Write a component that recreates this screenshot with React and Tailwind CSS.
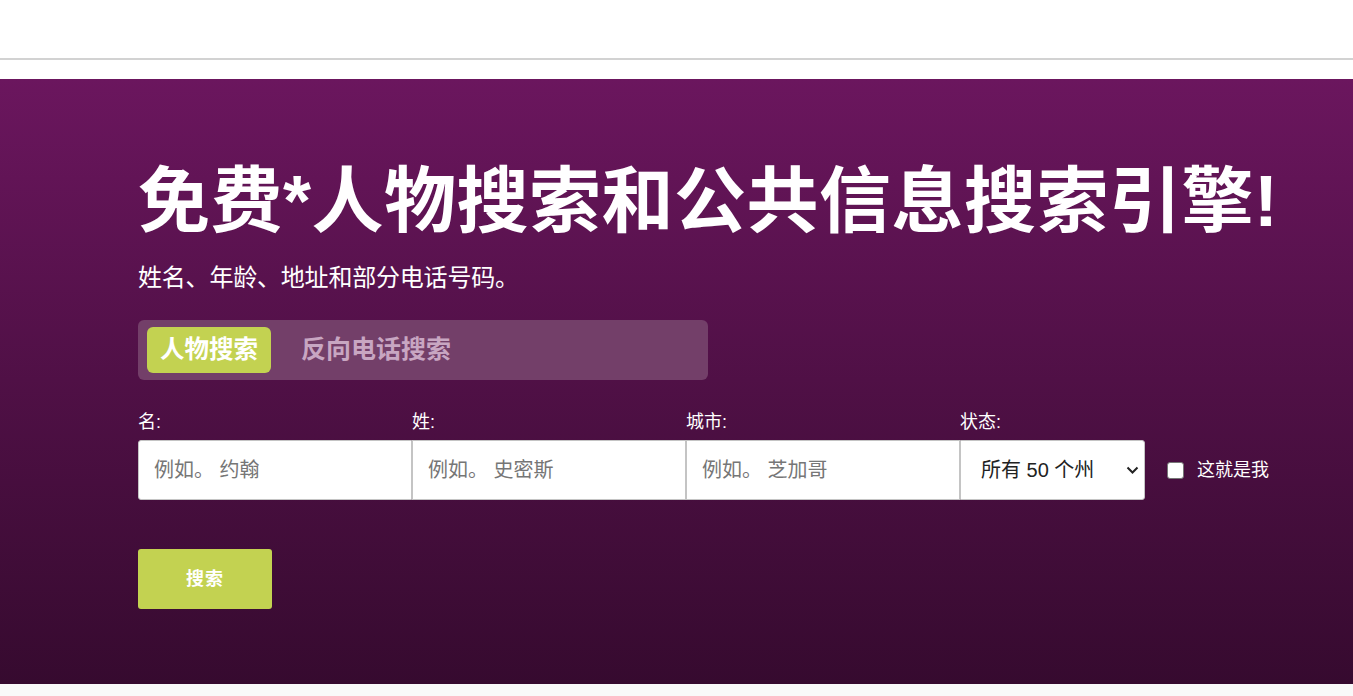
import React from "react";

const font = {
    fontFamily:
        '"Liberation Sans", "Noto Sans CJK SC", "Noto Sans", sans-serif',
};

const Field = ({ label, placeholder, first }) => (
    <div className="flex flex-col w-[274px]">
        <label className="text-white text-[18px] leading-[22px] mb-[7px]">
            {label}
        </label>
        <input
            type="text"
            placeholder={placeholder}
            className={`h-[60px] bg-white border border-[#c4c4c4] px-[15px] text-[20px] text-[#333] placeholder:text-[#767676] outline-none ${
                first ? "rounded-l-[3px]" : ""
            }`}
        />
    </div>
);

export default function App() {
    return (
        <div className="min-h-[696px] bg-[#f9f9f9]" style={font}>
            <header className="h-[60px] bg-white border-b-[2px] border-[#d2d2d2] shadow-[0_2px_3px_rgba(0,0,0,0.08)]" />
            <div className="h-[19px] bg-white" />
            <section className="bg-gradient-to-b from-[#6b165e] to-[#360a2f] h-[605px] pl-[138px] pt-[80px]">
                <h1 className="text-white font-bold text-[72px] leading-[84px] tracking-[0.5px] whitespace-nowrap">
                    免费*人物搜索和公共信息搜索引擎!
                </h1>
                <p className="text-white text-[24px] leading-[30px] mt-[20px] tracking-[-0.2px]">
                    姓名、年龄、地址和部分电话号码。
                </p>
                <div className="mt-[27px] w-[570px] h-[60px] bg-[#733f69] rounded-[6px] flex items-center px-[9px] gap-[30px]">
                    <button className="h-[46px] px-[13px] bg-[#c3d251] rounded-[6px] text-white font-bold text-[24.5px]">
                        人物搜索
                    </button>
                    <button className="text-[#c8a6c2] font-bold text-[25px]">
                        反向电话搜索
                    </button>
                </div>
                <div className="mt-[31px] flex items-end">
                    <Field label="名:" placeholder="例如。 约翰" first />
                    <Field label="姓:" placeholder="例如。 史密斯" />
                    <Field label="城市:" placeholder="例如。 芝加哥" />
                    <div className="flex flex-col w-[185px]">
                        <label className="text-white text-[18px] leading-[22px] mb-[7px]">
                            状态:
                        </label>
                        <div className="relative">
                            <select className="appearance-none w-full h-[60px] bg-white border border-[#c4c4c4] rounded-r-[3px] pl-[20px] text-[20px] text-[#222] outline-none">
                                <option>所有 50 个州</option>
                            </select>
                            <svg
                                className="absolute right-[6px] top-[26px] pointer-events-none"
                                width="13"
                                height="9"
                                viewBox="0 0 13 9"
                            >
                                <path
                                    d="M1.5 1.5 L6.5 6.5 L11.5 1.5"
                                    fill="none"
                                    stroke="#222"
                                    strokeWidth="2"
                                />
                            </svg>
                        </div>
                    </div>
                    <label className="flex items-center h-[60px] ml-[22px] text-white text-[18px]">
                        <span className="w-[17px] h-[17px] bg-white rounded-[3px] border border-[#767676] mr-[13px]" />
                        这就是我
                    </label>
                </div>
                <button className="mt-[49px] w-[134px] h-[60px] bg-[#c3d251] rounded-[3px] text-white font-bold text-[18px] tracking-[1px]">
                    搜索
                </button>
            </section>
        </div>
    );
}
